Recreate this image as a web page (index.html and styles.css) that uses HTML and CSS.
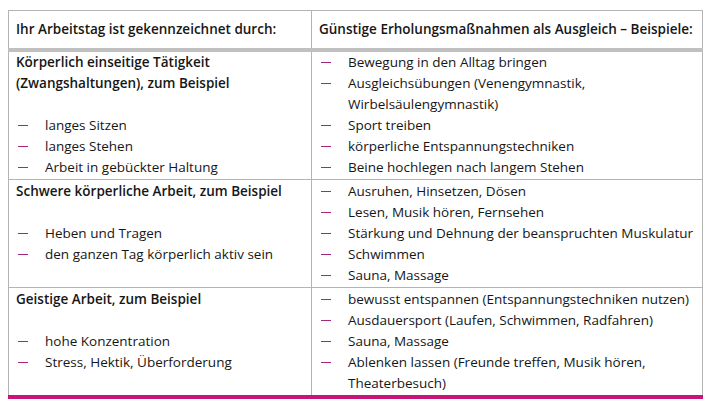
FILE: index.html
```html
<!DOCTYPE html>
<html lang="de">
<head>
<meta charset="utf-8">
<link rel="stylesheet" href="styles.css">
</head>
<body>
<table class="tbl">
  <thead>
    <tr>
      <th class="col-left">Ihr Arbeitstag ist gekennzeichnet durch:</th>
      <th class="col-right">Günstige Erholungsmaßnahmen als Ausgleich – Beispiele:</th>
    </tr>
  </thead>
  <tbody>
    <tr>
      <td>
        <div class="head">Körperlich einseitige Tätigkeit<br>(Zwangshaltungen), zum Beispiel</div>
        <div class="blank"></div>
        <ul class="list">
          <li>langes Sitzen</li>
          <li>langes Stehen</li>
          <li>Arbeit in gebückter Haltung</li>
        </ul>
      </td>
      <td>
        <ul class="list">
          <li>Bewegung in den Alltag bringen</li>
          <li>Ausgleichsübungen (Venengymnastik,<br>Wirbelsäulengymnastik)</li>
          <li>Sport treiben</li>
          <li>körperliche Entspannungstechniken</li>
          <li>Beine hochlegen nach langem Stehen</li>
        </ul>
      </td>
    </tr>
    <tr class="mid">
      <td>
        <div class="head">Schwere körperliche Arbeit, zum Beispiel</div>
        <div class="blank"></div>
        <ul class="list">
          <li>Heben und Tragen</li>
          <li>den ganzen Tag körperlich aktiv sein</li>
        </ul>
      </td>
      <td>
        <ul class="list">
          <li>Ausruhen, Hinsetzen, Dösen</li>
          <li>Lesen, Musik hören, Fernsehen</li>
          <li>Stärkung und Dehnung der beanspruchten Muskulatur</li>
          <li>Schwimmen</li>
          <li>Sauna, Massage</li>
        </ul>
      </td>
    </tr>
    <tr class="mid last">
      <td>
        <div class="head">Geistige Arbeit, zum Beispiel</div>
        <div class="blank"></div>
        <ul class="list">
          <li>hohe Konzentration</li>
          <li>Stress, Hektik, Überforderung</li>
        </ul>
      </td>
      <td>
        <ul class="list">
          <li>bewusst entspannen (Entspannungstechniken nutzen)</li>
          <li>Ausdauersport (Laufen, Schwimmen, Radfahren)</li>
          <li>Sauna, Massage</li>
          <li>Ablenken lassen (Freunde treffen, Musik hören,<br>Theaterbesuch)</li>
        </ul>
      </td>
    </tr>
  </tbody>
</table>
</body>
</html>
```
FILE: styles.css
```css
html, body {
  margin: 0;
  padding: 0;
  background: #ffffff;
}
body {
  padding: 10px 9px 0 8px;
  font-family: "Open Sans", "Noto Sans", sans-serif;
  font-size: 13.5px;
  color: #161616;
}
.tbl {
  width: 695px;
  border-collapse: collapse;
  table-layout: fixed;
}
.tbl th, .tbl td {
  border: 1px solid #b4b4b4;
  text-align: left;
  vertical-align: top;
  line-height: 21px;
}
.tbl th {
  font-weight: 600;
  height: 37px;
  padding: 0 7px;
  vertical-align: middle;
  border-bottom: 4px solid #c0c0c0;
}
.col-left { width: 288px; }
.tbl td {
  padding: 0 7px 1px 7px;
}
.tbl tr.mid td { padding-top: 1px; }
.tbl tbody tr:first-child td { border-top: 4px solid #c0c0c0; }
.tbl tr.last td { border-bottom: 4px solid #c8137b; }
.head {
  font-weight: 600;
}
.blank { height: 21px; }
.list {
  list-style: none;
  margin: 0;
  padding: 0;
}
.list li {
  position: relative;
  padding-left: 29px;
}
.list li::before {
  content: "";
  position: absolute;
  left: 2px;
  top: 10px;
  width: 10px;
  height: 1px;
  background: #a3277a;
}
```
